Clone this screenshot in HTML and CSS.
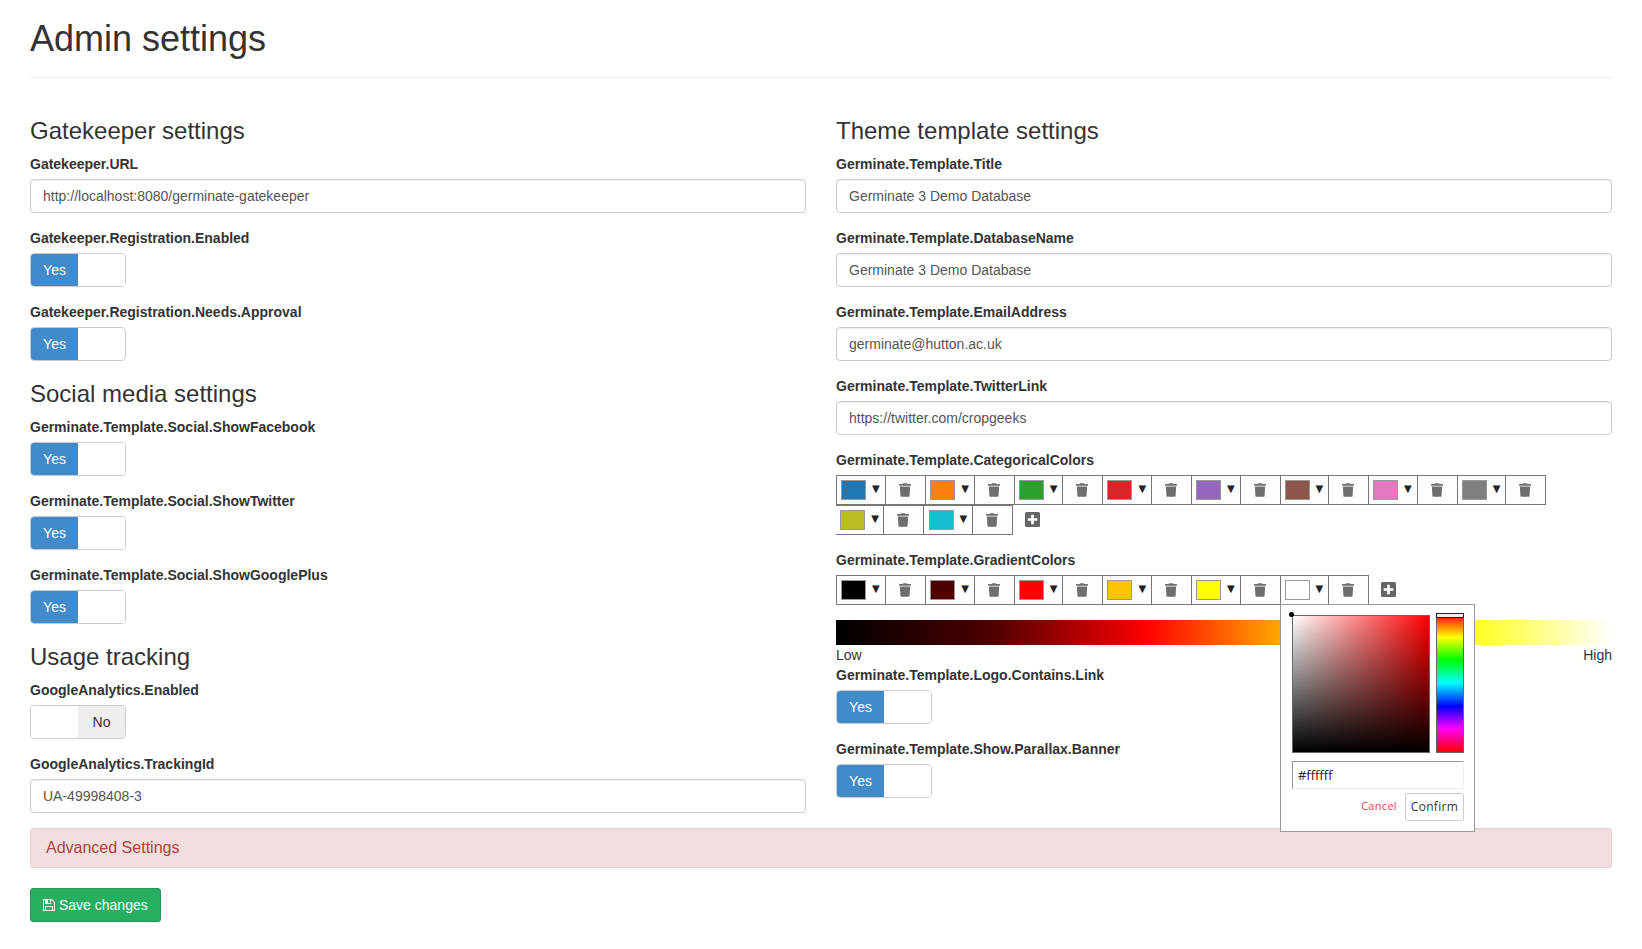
FILE: index.html
```html
<!DOCTYPE html>
<html lang="en">
<head>
<meta charset="utf-8">
<title>Admin settings</title>
<link rel="stylesheet" href="styles.css">
</head>
<body>
<svg class="defs" width="0" height="0" aria-hidden="true">
  <symbol id="trash" viewBox="0 0 448 512"><path d="M432 32H312l-9.4-18.7A24 24 0 0 0 281.1 0H166.8a23.72 23.72 0 0 0-21.4 13.3L136 32H16A16 16 0 0 0 0 48v32a16 16 0 0 0 16 16h416a16 16 0 0 0 16-16V48a16 16 0 0 0-16-16zM53.2 467a48 48 0 0 0 47.9 45h245.8a48 48 0 0 0 47.9-45L416 128H32z"/></symbol>
  <symbol id="plus" viewBox="0 32 448 448"><path d="M400 32H48C21.5 32 0 53.5 0 80v352c0 26.5 21.5 48 48 48h352c26.5 0 48-21.5 48-48V80c0-26.5-21.5-48-48-48zm-32 252c0 6.6-5.4 12-12 12h-92v92c0 6.6-5.4 12-12 12h-56c-6.6 0-12-5.4-12-12v-92H92c-6.6 0-12-5.4-12-12v-56c0-6.6 5.4-12 12-12h92v-92c0-6.6 5.4-12 12-12h56c6.6 0 12 5.4 12 12v92h92c6.6 0 12 5.4 12 12v56z"/></symbol>
</svg>
<main class="page">
  <header class="page-header"><h1>Admin settings</h1></header>
  <div class="columns">
    <section class="column">
      <h3>Gatekeeper settings</h3>
      <div class="field"><label>Gatekeeper.URL</label><input class="text-input" type="text" value="http://localhost:8080/germinate-gatekeeper"></div>
      <div class="field"><label>Gatekeeper.Registration.Enabled</label><div class="switch"><span class="on">Yes</span><span class="blank"></span></div></div>
      <div class="field"><label>Gatekeeper.Registration.Needs.Approval</label><div class="switch"><span class="on">Yes</span><span class="blank"></span></div></div>
      <h3>Social media settings</h3>
      <div class="field"><label>Germinate.Template.Social.ShowFacebook</label><div class="switch"><span class="on">Yes</span><span class="blank"></span></div></div>
      <div class="field"><label>Germinate.Template.Social.ShowTwitter</label><div class="switch"><span class="on">Yes</span><span class="blank"></span></div></div>
      <div class="field"><label>Germinate.Template.Social.ShowGooglePlus</label><div class="switch"><span class="on">Yes</span><span class="blank"></span></div></div>
      <h3>Usage tracking</h3>
      <div class="field"><label>GoogleAnalytics.Enabled</label><div class="switch"><span class="blank"></span><span class="off">No</span></div></div>
      <div class="field"><label>GoogleAnalytics.TrackingId</label><input class="text-input" type="text" value="UA-49998408-3"></div>
    </section>
    <section class="column">
      <h3>Theme template settings</h3>
      <div class="field"><label>Germinate.Template.Title</label><input class="text-input" type="text" value="Germinate 3 Demo Database"></div>
      <div class="field"><label>Germinate.Template.DatabaseName</label><input class="text-input" type="text" value="Germinate 3 Demo Database"></div>
      <div class="field"><label>Germinate.Template.EmailAddress</label><input class="text-input" type="text" value="germinate@hutton.ac.uk"></div>
      <div class="field"><label>Germinate.Template.TwitterLink</label><input class="text-input" type="text" value="https://twitter.com/cropgeeks"></div>
      <div class="field"><label>Germinate.Template.CategoricalColors</label>
        <div class="colors">
          <div class="pair start"><div class="pick"><i class="swatch c-blue"></i><span class="arrow">▼</span></div><div class="del"><svg class="trash"><use href="#trash"/></svg></div></div>
          <div class="pair"><div class="pick"><i class="swatch c-orange"></i><span class="arrow">▼</span></div><div class="del"><svg class="trash"><use href="#trash"/></svg></div></div>
          <div class="pair"><div class="pick"><i class="swatch c-green"></i><span class="arrow">▼</span></div><div class="del"><svg class="trash"><use href="#trash"/></svg></div></div>
          <div class="pair"><div class="pick"><i class="swatch c-red"></i><span class="arrow">▼</span></div><div class="del"><svg class="trash"><use href="#trash"/></svg></div></div>
          <div class="pair"><div class="pick"><i class="swatch c-purple"></i><span class="arrow">▼</span></div><div class="del"><svg class="trash"><use href="#trash"/></svg></div></div>
          <div class="pair"><div class="pick"><i class="swatch c-brown"></i><span class="arrow">▼</span></div><div class="del"><svg class="trash"><use href="#trash"/></svg></div></div>
          <div class="pair"><div class="pick"><i class="swatch c-pink"></i><span class="arrow">▼</span></div><div class="del"><svg class="trash"><use href="#trash"/></svg></div></div>
          <div class="pair"><div class="pick"><i class="swatch c-grey"></i><span class="arrow">▼</span></div><div class="del"><svg class="trash"><use href="#trash"/></svg></div></div>
          <div class="pair wrapped"><div class="pick"><i class="swatch c-olive"></i><span class="arrow">▼</span></div><div class="del"><svg class="trash"><use href="#trash"/></svg></div></div>
          <div class="pair wrapped"><div class="pick"><i class="swatch c-cyan"></i><span class="arrow">▼</span></div><div class="del"><svg class="trash"><use href="#trash"/></svg></div></div>
          <div class="add"><svg class="plus"><use href="#plus"/></svg></div>
        </div>
      </div>
      <div class="field"><label>Germinate.Template.GradientColors</label>
        <div class="colors">
          <div class="pair start"><div class="pick"><i class="swatch g-black"></i><span class="arrow">▼</span></div><div class="del"><svg class="trash"><use href="#trash"/></svg></div></div>
          <div class="pair"><div class="pick"><i class="swatch g-maroon"></i><span class="arrow">▼</span></div><div class="del"><svg class="trash"><use href="#trash"/></svg></div></div>
          <div class="pair"><div class="pick"><i class="swatch g-red"></i><span class="arrow">▼</span></div><div class="del"><svg class="trash"><use href="#trash"/></svg></div></div>
          <div class="pair"><div class="pick"><i class="swatch g-amber"></i><span class="arrow">▼</span></div><div class="del"><svg class="trash"><use href="#trash"/></svg></div></div>
          <div class="pair"><div class="pick"><i class="swatch g-yellow"></i><span class="arrow">▼</span></div><div class="del"><svg class="trash"><use href="#trash"/></svg></div></div>
          <div class="pair open"><div class="pick"><i class="swatch g-white"></i><span class="arrow">▼</span></div><div class="del"><svg class="trash"><use href="#trash"/></svg></div>
            <div class="popup">
              <div class="picker-top">
                <div class="sat"><b class="sat-dot"></b></div>
                <div class="hue"><b class="hue-handle"></b></div>
              </div>
              <input class="hex" type="text" value="#ffffff">
              <div class="popup-actions"><span class="cancel">Cancel</span><span class="confirm">Confirm</span></div>
            </div>
          </div>
          <div class="add"><svg class="plus"><use href="#plus"/></svg></div>
        </div>
      </div>
      <div class="gradient-bar"></div>
      <div class="scale"><span>Low</span><span>High</span></div>
      <div class="field"><label>Germinate.Template.Logo.Contains.Link</label><div class="switch"><span class="on">Yes</span><span class="blank"></span></div></div>
      <div class="field"><label>Germinate.Template.Show.Parallax.Banner</label><div class="switch"><span class="on">Yes</span><span class="blank"></span></div></div>
    </section>
  </div>
  <div class="panel">Advanced Settings</div>
  <button class="save" type="button"><svg class="floppy" viewBox="128 128 1536 1536"><path d="M512 1536h768v-384h-768v384zm896 0h128v-896q0-14-10-38.5t-20-34.5l-281-281q-10-10-34-20t-39-10v416q0 40-28 68t-68 28h-576q-40 0-68-28t-28-68v-416h-128v1280h128v-416q0-40 28-68t68-28h832q40 0 68 28t28 68v416zm-384-928v-320q0-13-9.5-22.5t-22.5-9.5h-192q-13 0-22.5 9.5t-9.5 22.5v320q0 13 9.5 22.5t22.5 9.5h192q13 0 22.5-9.5t9.5-22.5zm640 32v928q0 40-28 68t-68 28h-1344q-40 0-68-28t-28-68v-1344q0-40 28-68t68-28h928q40 0 88 20t76 48l280 280q28 28 48 76t20 88z"/></svg>Save changes</button>
</main>
</body>
</html>
```
FILE: styles.css
```css
* { box-sizing: border-box; }
html, body { margin: 0; background: #fff; }
body { font: 14px/20px "Liberation Sans", Arial, Helvetica, sans-serif; color: #333; }
.defs { position: absolute; }
.page { padding: 0 30px 20px; }
.page-header { padding-bottom: 9px; margin-bottom: 20px; border-bottom: 1px solid #eee; }
h1 { margin: 19.4px 0 9px; font-size: 36px; font-weight: 500; line-height: 1.1; }
h3 { margin: 20px 0 10px; font-size: 24px; font-weight: 500; line-height: 26px; }
.columns { display: grid; grid-template-columns: 1fr 1fr; column-gap: 30px; }
.field { margin-bottom: 15px; }
label { display: block; margin-bottom: 5px; font-weight: 700; }
.text-input { display: block; width: 100%; height: 34px; padding: 6px 12px; font: inherit; color: #555; background: #fff; border: 1px solid #ccc; border-radius: 4px; box-shadow: inset 0 1px 1px rgba(0,0,0,.075); }

.switch { display: flex; width: 96px; height: 34px; border: 1px solid #ccc; border-radius: 4px; overflow: hidden; }
.switch span { flex: 1; text-align: center; line-height: 32px; }
.on { background: #428bca; color: #fff; }
.off { background: #eee; color: #333; }
.blank { background: #fff; }

.colors { display: flex; flex-wrap: wrap; align-items: stretch; }
.pair { position: relative; display: flex; height: 30px; }
.pick, .del { display: flex; align-items: center; border: 1px solid #777; border-left: 0; background: #fdfdfd; }
.pick { width: 48.57px; padding-left: 4px; }
.del { width: 40px; padding-right: 1px; justify-content: center; }
.start .pick { width: 50.3px; padding-left: 4px; border-left: 1px solid #777; }
.wrapped .pick { width: 48.3px; padding-left: 4.3px; }
.swatch { display: block; flex: none; width: 25px; height: 20px; border: 1px solid #999; }
.arrow { margin-left: 6px; margin-top: -2px; font: 10px/12px "DejaVu Sans", sans-serif; color: #222; }
.trash { width: 12px; height: 14px; fill: #6e6e6e; }
.add { display: flex; align-items: center; padding-left: 12px; height: 30px; }
.plus { width: 15px; height: 15px; fill: #666; }

.c-blue { background: #1f77b4; } .c-orange { background: #ff7f0e; } .c-green { background: #2ca02c; }
.c-red { background: #d62728; } .c-purple { background: #9467bd; } .c-brown { background: #8c564b; }
.c-pink { background: #e377c2; } .c-grey { background: #7f7f7f; } .c-olive { background: #bcbd22; } .c-cyan { background: #17becf; }
.g-black { background: #000; } .g-maroon { background: #4d0000; } .g-red { background: #f00; }
.g-amber { background: #ffc300; } .g-yellow { background: #ff0; } .g-white { background: #fff; }

.gradient-bar { height: 25px; background: linear-gradient(to right, #000, #4d0000 20%, #f00 40%, #ffc300 60%, #ff0 80%, #fff); }
.scale { display: flex; justify-content: space-between; }

.popup { position: absolute; left: -0.6px; top: 29px; z-index: 5; width: 195px; height: 228px; padding: 8px 10px 0 11px; background: #fff; border: 1px solid #999; }
.picker-top { display: flex; justify-content: space-between; align-items: flex-end; }
.sat { position: relative; width: 138px; height: 138px; border: 1px solid #666; background: linear-gradient(to top, #000, rgba(0,0,0,0)), linear-gradient(to right, #fff, #f00); }
.sat-dot { position: absolute; left: -4px; top: -4px; width: 5px; height: 5px; border-radius: 50%; background: #000; }
.hue { position: relative; width: 28px; height: 140px; border: 1px solid #666; background: linear-gradient(to bottom, #f00, #ff0 17%, #0f0 33%, #0ff 50%, #00f 67%, #f0f 83%, #f00); }
.hue-handle { position: absolute; left: -1px; right: -1px; top: -1px; height: 5px; background: #eee; border: 1px solid #222; }
.hex { display: block; width: 100%; height: 28px; margin-top: 8px; padding: 0 5px; font: 13px "Open Sans", sans-serif; color: #222; background: #fff; border: 1px solid #eee; border-top-color: #999; border-left-color: #999; }
.popup-actions { display: flex; justify-content: flex-end; align-items: center; gap: 8px; margin-top: 4px; }
.cancel { margin-top: -3px; font: 11px "Open Sans", sans-serif; letter-spacing: .3px; color: #e8404f; }
.confirm { display: block; width: 59px; height: 28px; font: 12px/26px "Open Sans", sans-serif; letter-spacing: .3px; text-align: center; color: #333; border: 1px solid #ccc; border-radius: 2px; }

.panel { height: 40px; margin-bottom: 20px; padding: 9px 15px; font-size: 16px; line-height: 20px; color: #a94442; background: #f2dede; border: 1px solid #ebccd1; border-radius: 3px; box-shadow: 0 1px 1px rgba(0,0,0,.05); }
.save { display: flex; align-items: center; height: 34px; padding: 6px 12px; font: inherit; color: #fff; background: #27ae60; border: 1px solid #229955; border-radius: 3px; }
.floppy { width: 12px; height: 12px; margin-right: 4px; fill: #fff; }
```
